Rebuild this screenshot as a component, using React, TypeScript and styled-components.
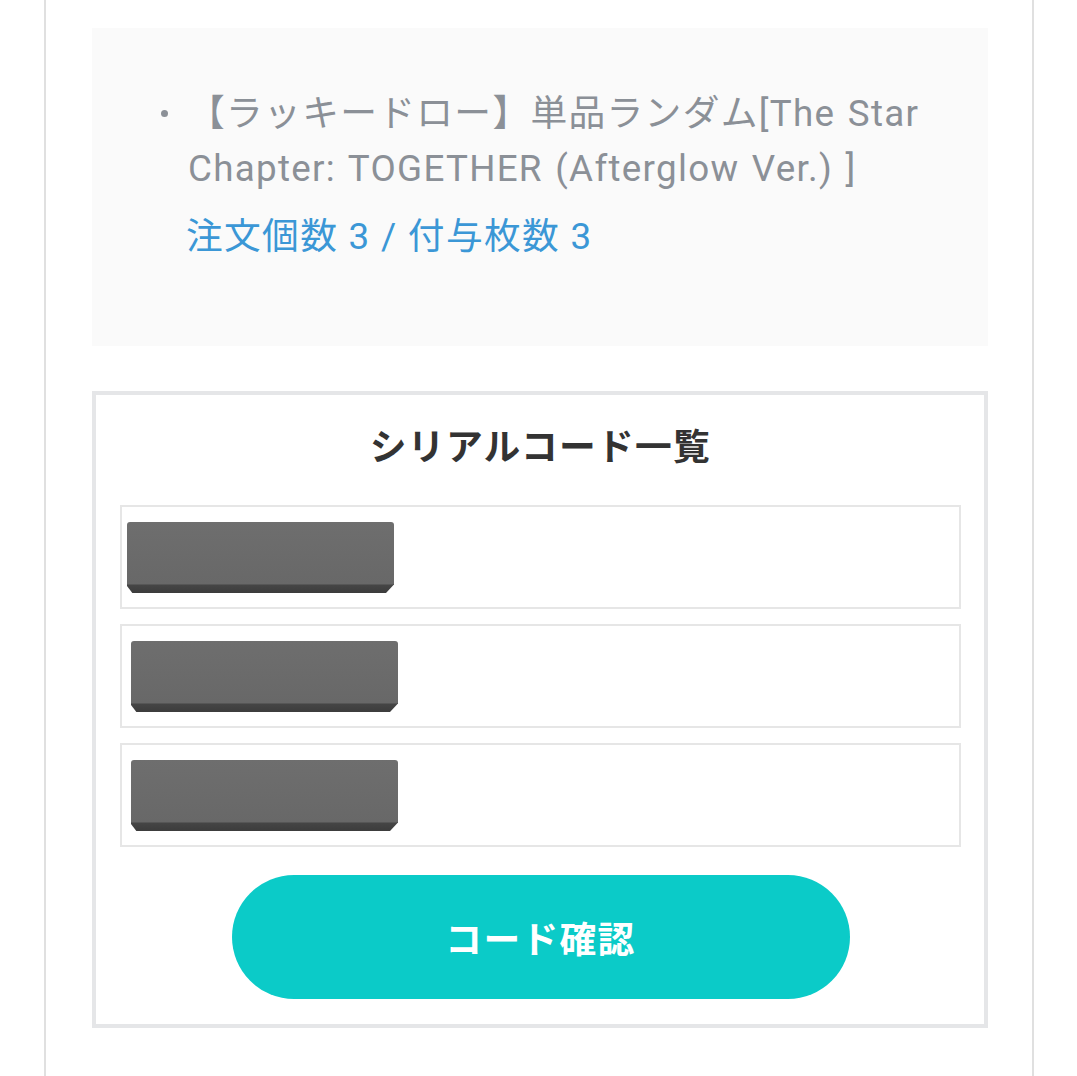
import React from "react";
import styled, { createGlobalStyle } from "styled-components";

const GlobalStyle = createGlobalStyle`
  html, body {
    margin: 0;
    padding: 0;
    background: #ffffff;
  }
  body {
    font-family: Roboto, "Noto Sans CJK JP", "Noto Sans", sans-serif;
    letter-spacing: 1.3px;
  }
`;

const Frame = styled.div`
  box-sizing: border-box;
  width: 990px;
  min-height: 1076px;
  margin-left: 44px;
  padding: 28px 44px 0 46px;
  border-left: 2px solid #e0e0e0;
  border-right: 2px solid #e0e0e0;
`;

const OrderBox = styled.div`
  box-sizing: border-box;
  height: 318px;
  background: #fafafa;
  padding: 58px 40px 0 0;
`;

const ItemList = styled.ul`
  list-style: none;
  margin: 0;
  padding: 0;
`;

const Item = styled.li`
  position: relative;
  padding-left: 96px;
  font-size: 36.75px;
  line-height: 55px;
  color: #8b9097;
  word-spacing: 2px;

  &::before {
    content: "";
    position: absolute;
    left: 69px;
    top: 24px;
    width: 7px;
    height: 7px;
    border-radius: 50%;
    background: #8b9097;
  }
`;

const Quantity = styled.div`
  margin-top: 13px;
  margin-left: -2px;
  color: #3b97d6;
  word-spacing: 0;
`;

const SerialBox = styled.section`
  box-sizing: border-box;
  margin-top: 45px;
  border: 4px solid #e5e6e8;
  padding: 25px 23px 25px 24px;
`;

const Title = styled.h2`
  margin: 0 0 30px;
  text-align: center;
  font-size: 36.75px;
  line-height: 55px;
  font-weight: 700;
  color: #333333;
`;

const CodeList = styled.div`
  display: flex;
  flex-direction: column;
  gap: 15px;
`;

const CodeRow = styled.div<{ $shift: number }>`
  box-sizing: border-box;
  height: 104px;
  border: 2px solid #e6e6e6;
  padding: 15px 0 0 ${(p) => p.$shift}px;
`;

const Redacted = styled.div`
  width: 267px;
  height: 71px;
  border-radius: 3px 3px 0 0;
  background: linear-gradient(
    to bottom,
    #6e6e6e 0,
    #686868 87%,
    #454545 89%,
    #3c3c3c 100%
  );
  clip-path: polygon(0 0, 100% 0, 100% 88%, 97% 100%, 2% 100%, 0 90%);
`;

const ConfirmButton = styled.button`
  display: block;
  margin: 28px auto 0;
  width: 618px;
  height: 124px;
  border: none;
  border-radius: 62px;
  background: #0bcbc8;
  color: #ffffff;
  font-family: Roboto, "Noto Sans CJK JP", sans-serif;
  font-size: 36.75px;
  font-weight: 700;
  letter-spacing: 1.3px;
  cursor: pointer;
`;

const codes = [5, 9, 9];

export default function App() {
  return (
    <>
      <GlobalStyle />
      <Frame>
        <OrderBox>
          <ItemList>
            <Item>
              【ラッキードロー】単品ランダム[The Star Chapter: TOGETHER (Afterglow Ver.) ]
              <Quantity>注文個数 3 / 付与枚数 3</Quantity>
            </Item>
          </ItemList>
        </OrderBox>
        <SerialBox>
          <Title>シリアルコード一覧</Title>
          <CodeList>
            {codes.map((shift, i) => (
              <CodeRow key={i} $shift={shift}>
                <Redacted />
              </CodeRow>
            ))}
          </CodeList>
          <ConfirmButton type="button">コード確認</ConfirmButton>
        </SerialBox>
      </Frame>
    </>
  );
}
